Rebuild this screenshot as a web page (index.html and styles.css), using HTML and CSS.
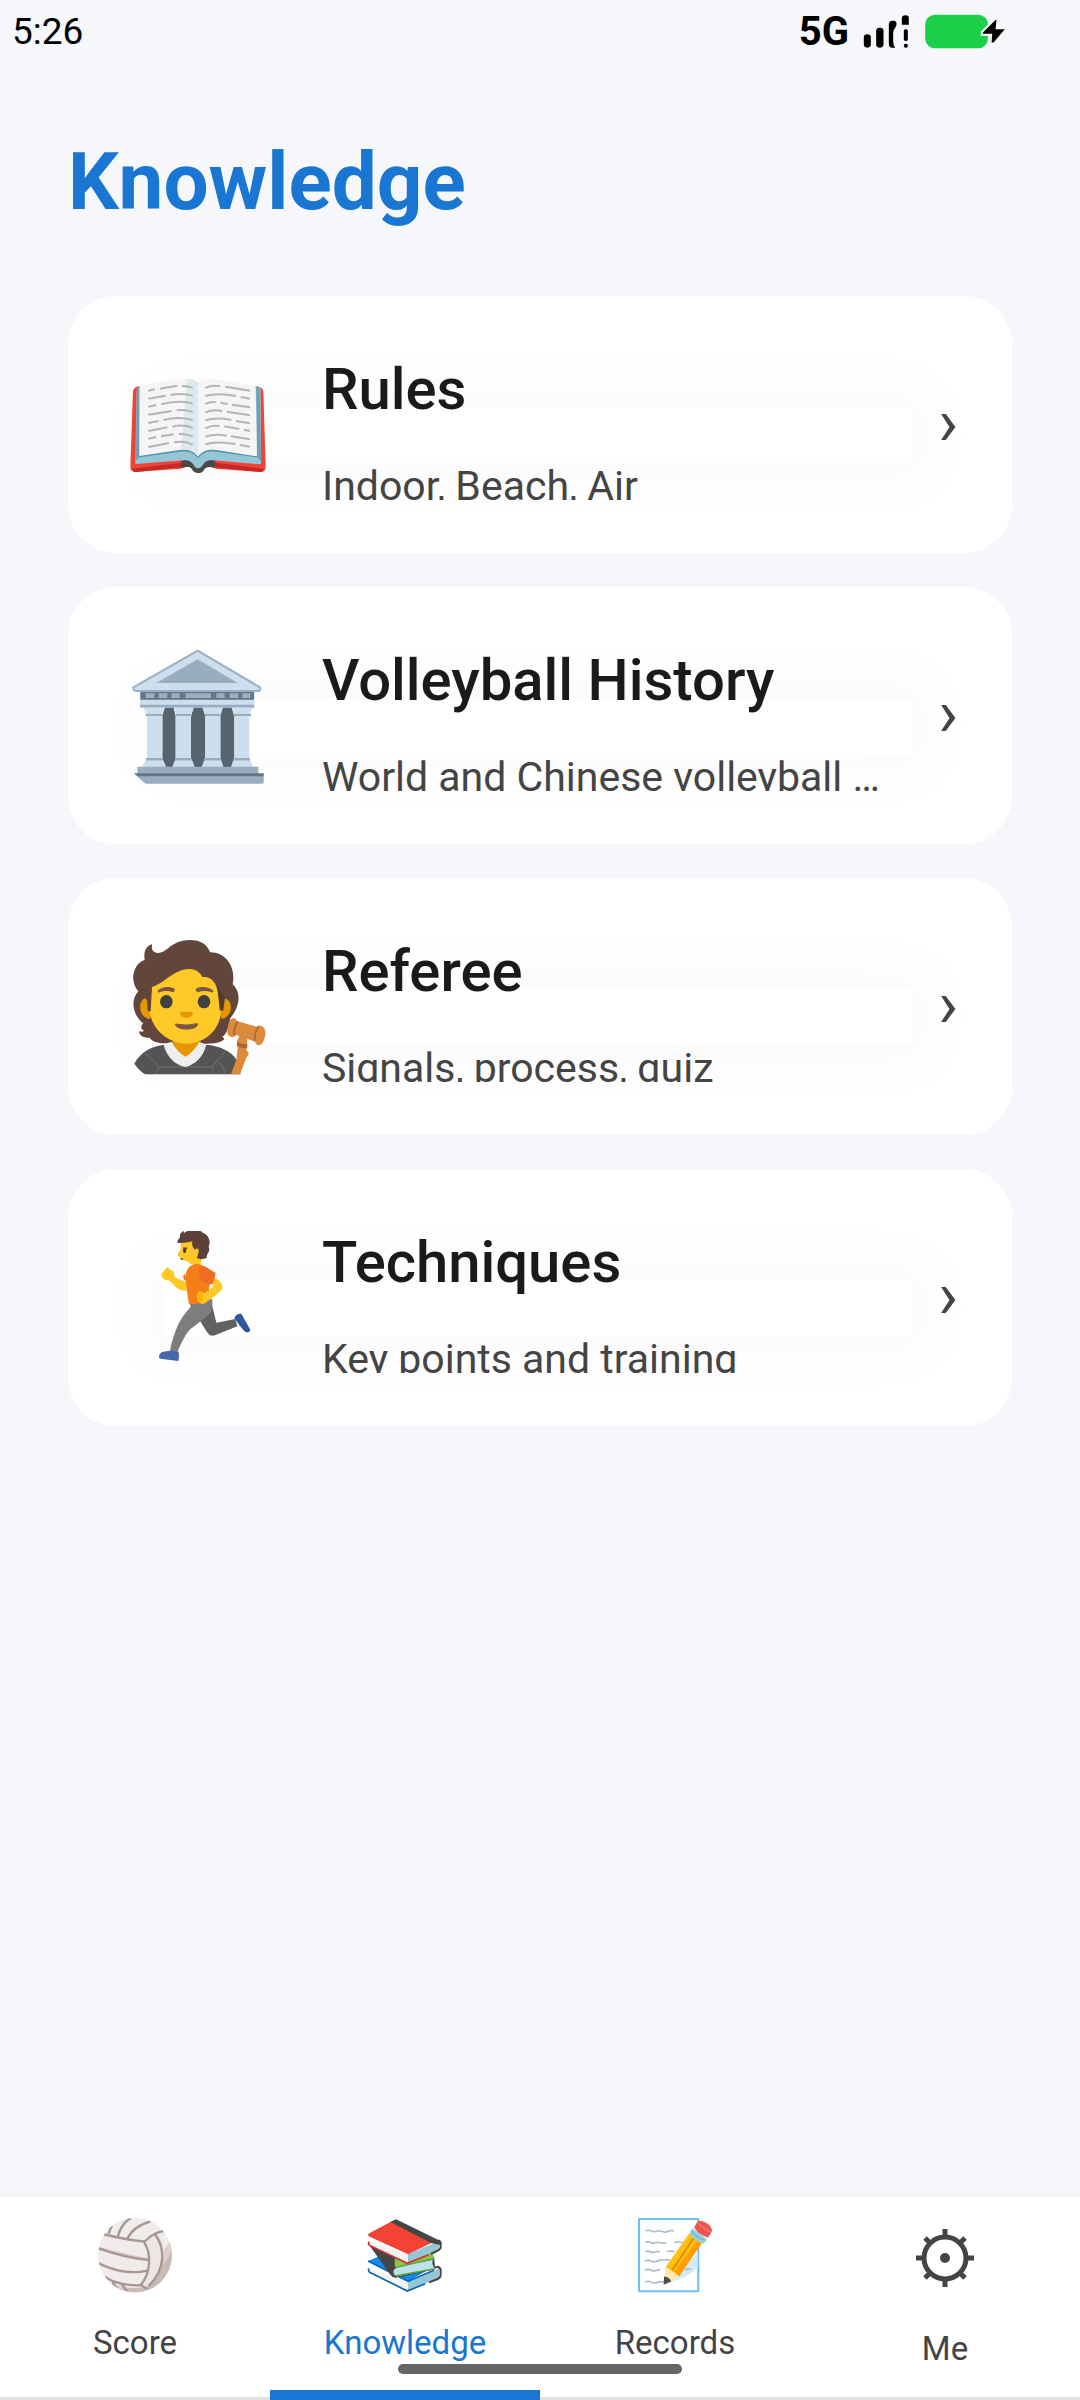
FILE: index.html
```html
<!DOCTYPE html>
<html lang="en">
<head>
  <meta charset="UTF-8" />
  <meta name="viewport" content="width=device-width, initial-scale=1.0" />
  <title>Knowledge</title>
  <link rel="stylesheet" href="styles.css">
</head>
<body>
  <header class="status-bar">
    <span class="status-time">5:26</span>
    <div class="status-icons">
      <span class="status-network">5G</span>
      <svg class="status-signal" viewBox="310 40 140 105" aria-hidden="true">
        <rect x="312" y="101" width="21" height="40" rx="10" />
        <rect x="349" y="81" width="22" height="60" rx="10" />
        <path d="M387 71q0-11 11-11h3q10 0 9 11c-1 10-10 15-10 28v22q0 12 6 20h-9q-10-1-10-12z" />
        <path d="M426 72V54q0-10 11-10t10 10v18z" />
        <rect x="432" y="86" width="12" height="35" rx="5" />
        <rect x="432" y="129" width="12" height="12" rx="5" />
      </svg>
      <svg class="status-battery" viewBox="493 40 245 106" aria-hidden="true">
        <rect x="495" y="42" width="190" height="102" rx="30" fill="#1ccf49" />
        <path d="M708 58l-38 38v4h28l-2 26h6l34-40h-28l3-28z" fill="#000" stroke="#f5f7fb" stroke-width="13" paint-order="stroke" />
      </svg>
    </div>
  </header>

  <main class="content">
    <h1 class="page-title">Knowledge</h1>

    <div class="card-list">
      <a class="card" href="#rules">
        <svg class="card-icon" viewBox="203 205 420 420" aria-hidden="true">
          <path d="M218 305q1-11 12-14l8-2 350 1 10 2q10 3 11 14l7 226q0 14-14 15l-135-10-18-6h-70l-18 6-137 10q-14-1-14-15z" fill="#f44336" />
          <path d="M216 537l146-18v14l-135 14q-9 0-11-10zM465 519l146 18q-3 10-12 10l-134-14z" fill="#c62828" />
          <path d="M362 514l20-5h65l18 5v20c-17-4-29-3-34 6-4 8-10 10-18 10s-14-3-18-11c-4-8-16-8-33-5z" fill="#494949" />
          <path d="M238 289l350 1 13 3 1 231-143-12c-21-2-27 7-32 14-8 13-20 13-27 0-7-10-14-15-28-14l-147 11 4-221z" fill="#94c6d6" />
          <path d="M237 291h-7l-4 223 10-12zM588 291l10 2 4 222-12-13z" fill="#6f9fb3" />
          <path d="M236 500l127-17c25-3 40 7 50 19 10-12 25-22 50-19l127 18" fill="none" stroke="#4e93a6" stroke-width="5" />
          <path d="M238 289c45-11 98-19 143-22q20 0 32 12 12-12 32-12c45 4 97 12 141 23l4 210-126-20c-27-3-42 8-51 21-10-14-25-25-51-21l-125 19z" fill="#f5f5f5" />
          <path d="M381 267q20 0 32 12v222c-10-14-25-24-51-21z" fill="#dceaed" />
          <g fill="none" stroke="#b5b5b5" stroke-width="6">
            <path d="M264 303l20-4m15-2l52-9m14 1q18 0 32 5M264 327l52-9m14-2q37-7 67 2M264 351l24-5m15-2q55-14 94-2M264 375l70-11m15-2q25-4 48 5M264 400l31-6m14-3q48-12 88 0M264 424l57-11m15-2q35-8 61 4M264 447l24-5m14-2l38-6m16-1q20-2 41 7M264 472l62-12m15-2q34-6 56 8" />
            <path d="M435 295q20-10 45-5m15 1l74 12M435 319q36-10 92 0m14 3l28 5M435 343q15-8 31-5m14 1l22 4m13 2l54 8M435 368q26-10 50-3m15 1l69 11M435 392q35-10 78-1m14 3l42 7M435 416q20-10 42-7m15 1l45 8m14 2l18 4M435 441q29-10 64-3m13 2l57 9M435 465q28-12 90-2m14 3l30 5" />
          </g>
        </svg>
        <div class="card-text">
          <h2 class="card-title">Rules</h2>
          <p class="card-subtitle">Indoor, Beach, Air</p>
        </div>
        <span class="card-arrow" aria-hidden="true">›</span>
      </a>

      <a class="card" href="#history">
        <svg class="card-icon" viewBox="203 208 420 420" aria-hidden="true">
          <path d="M240 335h342v50H240z" fill="#bdd1e4" />
          <path d="M240 337h341v23H240z" fill="#647687" />
          <path d="M256 341h26v14h-26zm39 0h26v14h-26zm38 0h25v14h-25zm42 0h77v14h-77zm93 0h25v14h-25zm40 0h26v14h-26zm38 0h24v14h-24z" fill="#9aafc1" />
          <path d="M412 213l187 110q3 11-8 11H229q-11 0-10-11z" fill="#cddeee" stroke="#9aafc1" stroke-width="6" stroke-linejoin="round" />
          <path d="M412 239l120 71H288z" fill="#98adc0" />
          <path d="M240 361h341v15H240z" fill="#cddeee" />
          <path d="M240 375h341v8H240z" fill="#98adc0" />
          <path d="M306 410l7-26h27l6 26v126l-6 26h-23l-11-26z" fill="#56646f" />
          <path d="M392 410l8-26h27l8 26v126l-8 26h-25l-10-26z" fill="#56646f" />
          <path d="M480 410l7-26h27l8 26v126l-8 26h-25l-9-26z" fill="#56646f" />
          <path d="M249 384h64q-3 14-9 18h-44q-6-4-11-18zM340 384h60q-3 14-9 18h-41q-6-4-10-18zM427 384h60q-3 14-9 18h-41q-7-4-10-18zM514 384h61q-3 14-9 18h-42q-7-4-10-18z" fill="#cddeee" />
          <path d="M256 402h51v8h-51zm90 0h48v8h-48zm87 0h49v8h-49zm87 0h52v8h-52z" fill="#98adc0" />
          <path d="M260 410h46v126h-46zm86 0h46v126h-46zm89 0h45v126h-45zm87 0h45v126h-45z" fill="#cddeee" />
          <path d="M257 535h51v8h-51zm87 0h50v8h-50zm87 0h50v8h-50zm88 0h50v8h-50z" fill="#98adc0" />
          <path d="M255 543h52l8 19h-70zm88 0h53l7 19h-67zm88 0h52l6 19h-65zm87 0h52l8 19h-66z" fill="#cddeee" />
          <path d="M231 561h363v22H231z" fill="#98adc0" />
          <path d="M222 582h388v26q0 4-4 4H258q-4 0-8-4z" fill="#98adc0" />
          <path d="M221 581h389v9H232z" fill="#647687" />
        </svg>
        <div class="card-text">
          <h2 class="card-title">Volleyball History</h2>
          <p class="card-subtitle">World and Chinese volleyball …</p>
        </div>
        <span class="card-arrow" aria-hidden="true">›</span>
      </a>

      <a class="card" href="#referee">
        <svg class="card-icon" viewBox="203 211 420 420" aria-hidden="true">
          <path d="M253 271c-4-26 5-43 22-47-2 20 5 30 29 24 18-6 35-36 84-37 34 0 53 14 61 37 47-1 79 44 68 96 30 28 18 71-7 101-5 25-8 40-20 54l-4 1 6 9c-22 20-75 12-95 10h-72c-17 5-48 0-57-15-25 2-33-12-31-19q12 3 14-3c-9-1-12-13-2-21-29-21-42-67-15-96-29-31-14-85 19-94z" fill="#63463b" />
          <path d="M336 504h80v20l-10 50-31 14-33-14z" fill="#e59600" />
          <path d="M222 582c20-38 55-53 90-57l64 65 61-65c43 3 77 21 92 46l12 43H255q-17-9-33-32z" fill="#545454" />
          <path d="M253 548l43 43-10 22M296 592h159M495 546l-41 46 8 22M472 575q20 15 22 39" fill="none" stroke="#676767" stroke-width="4" />
          <path d="M310 526l23-10c12 20 25 35 42 45 18-10 32-25 42-45l21 10c-9 34-33 60-63 66-32-6-56-31-65-66z" fill="#eee" />
          <path d="M256 386c-24 4-24 58 13 62l8-20zM492 386c30 7 24 56-8 62l-8-20z" fill="#e59600" />
          <path d="M275 352c45-15 62-52 112-54 21 1 33 11 39 24 30-2 45 18 50 66 24 70-30 134-97 134-67-1-125-61-109-134z" fill="#ffca28" />
          <path d="M275 351l-15 33 2 38q3 5 9 2z" fill="#63463b" />
          <path d="M471 350l7 70q6 5 11 2l5-38z" fill="#543930" />
          <path d="M291 364c10-12 35-16 52-7 0 5 0 9-4 11-16-5-29-5-43 1zM406 357c16-9 42-5 54 7l-5 5c-14-6-28-6-43-1q-7-4-6-11z" fill="#795548" />
          <ellipse cx="318" cy="396" rx="19" ry="20" fill="#404040" />
          <ellipse cx="431" cy="396" rx="19" ry="20" fill="#404040" />
          <path d="M358 431q1-5 8-5h24q8 0 8 6c-7 17-33 17-40-1z" fill="#e59600" />
          <path d="M345 463q32 7 66-1c4 21-64 22-66 1z" fill="#795548" stroke="#795548" stroke-width="3" stroke-linejoin="round" />
          <path d="M539 495l23 8-2 16 1 12-3 12q8 3 7 10-8 12-12 24l-14 37h-27l16-44 4-36q-4-6-2-20z" fill="#dc8a3c" />
          <path d="M532 516q12 10 29 6l-1 12q-18 5-30-7z" fill="#aa6433" />
          <path d="M521 445q7 2 8 9l59 17q8-5 15-2c13 5 15 17 9 39-4 15-13 22-21 17q-7-3-6-9l-57-20q-6 8-15 6c-14-3-14-14-10-31s9-27 18-26z" fill="#dc8a3c" />
          <path d="M533 455q-12 16-12 41M595 471q-13 16-12 42" fill="none" stroke="#aa6433" stroke-width="5" />
        </svg>
        <div class="card-text">
          <h2 class="card-title">Referee</h2>
          <p class="card-subtitle">Signals, process, quiz</p>
        </div>
        <span class="card-arrow" aria-hidden="true">›</span>
      </a>

      <a class="card" href="#techniques">
        <svg class="card-icon" viewBox="203 214 420 420" aria-hidden="true">
          <path d="M456 440l12 49 57-11 6 22-65 26c-14 5-20 0-26-9l-26-41z" fill="#616161" />
          <path d="M388 430l67-12c4 25 0 40-13 50l-54 42c-15 17-25 40-37 67l-22-4c5-28 14-54 25-79 8-18 22-35 37-53z" fill="#7d7d7d" />
          <path d="M522 476c2-9 10-15 21-14 10 18 18 31 27 48-1 7-7 9-15 7-12-11-21-25-33-41z" fill="#30569b" />
          <path d="M304 578q21-9 51-2 3 14-1 28l-54-7c-6-1-6-12 4-19z" fill="#4668ae" />
          <path d="M304 343l10-14 9-6 7 8 10 4 2 14c8 8 18 12 27 14l12 7-3 24c-20 1-32-10-45-26l-10-7c-9 2-19-5-19-18z" fill="#ffc827" />
          <path d="M373 343l-5 9q3 11 12 14z" fill="#ef6c21" />
          <path d="M364 241l43-3 20 29-6 48-31-2c-3-7-10-9-22-11q-9-1-6-8l-11-7q2-11 10-17 0-20 3-29z" fill="#ffc827" />
          <path d="M351 250c1-9 3-13 8-16-2-10 2-16 11-20l1 6c22-17 48-11 56-1 21 8 24 28 18 42q5 13-4 22l-3 13-16 3-13-4 4-9-10-9-1-10c-8-3-7-22-6-22-13 3-23 5-37 5z" fill="#5d4037" />
          <path d="M402 270q13-8 13 1 0 20-13 18z" fill="#ffc827" />
          <path d="M368 265l13 1" stroke="#795548" stroke-width="5" />
          <ellipse cx="373" cy="273" rx="5" ry="7" fill="#404040" />
          <path d="M360 294l9 2-2 4-7-1z" fill="#795548" />
          <path d="M405 312c20-1 41 14 45 43l-5 42-7 34-52 2c-6-30-6-50-10-73-3-24 7-43 29-48z" fill="#f57f17" />
          <path d="M454 361l12-6c13 9 24 20 19 32-11 18-38 33-57 46-11-2-20-12-19-25l6-13 20 5 24-20q-3-10-5-19z" fill="#ffc827" />
          <path d="M415 332q6-15 18-12l33 20q-3 17-9 33-14 5-37-13z" fill="#ef6c21" />
          <path d="M412 405l12-8q9 10 0 31-15-8-12-23z" fill="#ffb300" />
        </svg>
        <div class="card-text">
          <h2 class="card-title">Techniques</h2>
          <p class="card-subtitle">Key points and training</p>
        </div>
        <span class="card-arrow" aria-hidden="true">›</span>
      </a>
    </div>
  </main>

  <nav class="tab-bar" aria-label="Main">
    <a class="tab" href="#score">
      <svg class="tab-icon" viewBox="280 110 222 230" preserveAspectRatio="none" aria-hidden="true">
        <clipPath id="ball"><ellipse cx="391" cy="225" rx="108" ry="113" /></clipPath>
        <g clip-path="url(#ball)">
          <path d="M280 110h222v230H280z" fill="#f0eceb" />
          <path d="M502 170l-26 40c-5 40-10 75-38 112l-18 10-20-3-70-15-50-30v60h222z" fill="#dccfcc" />
          <path d="M502 205c-15 40-50 68-40 70-10 25-30 40-50 48l-80 6v15h170z" fill="#cbb9b5" />
          <path d="M285 250c45 25 95 35 140 22v6c-45 8-95 2-140-22zM285 201l143 34v8l-143-34zM300 160l115 22-3 7-112-20z" fill="#dccfcc" />
          <path d="M448 165l20-8c12 40 9 80-10 125-8 20-20 30-35 40l-12-5c20-20 24-50 24-82 0-30-5-45-15-50z" fill="#ece6e4" />
          <path d="M285 256c45 23 95 33 140 22-2 15-8 27-16 38-33 3-75-4-106-25z" fill="#f0eceb" />
          <g fill="none" stroke="#a89693" stroke-width="7">
            <path d="M300 162c30 8 78 20 119 22 17-17 36-29 55-31" />
            <path d="M314 160l9-25M340 172c5-22 15-43 38-59M368 177c12-28 35-44 68-54" />
            <path d="M285 205c45 17 95 30 146 35M285 250c45 23 95 33 141 22" />
            <path d="M417 185c23 35 20 95-9 131M448 160c29 40 37 103-17 159" />
            <path d="M303 291c30 21 72 28 105 25l20 12M325 307l14 19M352 313l16 22" />
          </g>
        </g>
      </svg>
      <span class="tab-label">Score</span>
    </a>
    <a class="tab active" href="#knowledge" aria-current="page">
      <svg class="tab-icon" viewBox="1065 110 222 230" preserveAspectRatio="none" aria-hidden="true">
        <path d="M1068 243l46-20 145 37-74 46z" fill="#0d8cf0" />
        <path d="M1070 262l115 46v24l-112-56q-6-6-3-14z" fill="#f2f2f2" />
        <path d="M1185 306l90-41v28l-90 40z" fill="#94c6d6" />
        <path d="M1068 243l117 62 75-34M1070 266q-2 8 4 12l109 56 52-22" fill="none" stroke="#0d63b0" stroke-width="5" />
        <path d="M1258 264l15-3q9 5 7 14v13q-3 8-14 12l-20 8" fill="none" stroke="#454545" stroke-width="6" />
        <path d="M1073 197l70 30 118 3 3 38-105 24-25-6z" fill="#454545" />
        <path d="M1146 230l108-17 8 22-116 32z" fill="#8bc34a" />
        <path d="M1146 263l112-24q-6 12 5 27l-111 24q-17-11-6-27z" fill="#b9e4ea" />
        <path d="M1260 236l-112 27q-16 9-6 26l118-22" fill="none" stroke="#689f38" stroke-width="4" />
        <path d="M1149 262q-17 9-9 27l12 3" fill="none" stroke="#454545" stroke-width="5" />
        <path d="M1070 184l115 38v28l-112-55q-6-5-3-11z" fill="#f2f2f2" />
        <path d="M1185 222l90-38v26l-90 38z" fill="#94c6d6" />
        <path d="M1070 160l65-36 120 64-70 35-112-53q-8-4-3-10z" fill="#f44336" />
        <path d="M1133 125l17-8 125 63q9 6 6 13l-7 1-22-5z" fill="#454545" />
        <path d="M1273 180q9 5 7 14v10q-3 6-14 11l-15 7" fill="none" stroke="#454545" stroke-width="6" />
        <path d="M1071 185q-5 8 5 13l107 52 62-26" fill="none" stroke="#d32f2f" stroke-width="5" />
      </svg>
      <span class="tab-label">Knowledge</span>
    </a>
    <a class="tab" href="#records">
      <svg class="tab-icon" viewBox="280 110 222 230" preserveAspectRatio="none" aria-hidden="true">
        <rect x="286" y="116" width="173" height="219" fill="#fff" stroke="#70bff2" stroke-width="6" stroke-linejoin="round" />
        <path d="M457 220v42c-22 23-45 37-88 46z" fill="#d3eafa" />
        <path d="M305 152q8-4 16 0t16 1 17 1 15 0 18-2M305 187q8-4 15 0t15 1 15 0 15 0M389 187q10-3 26 1M305 215q8-4 14 0t14 1 14 0M368 215q10-4 22 1M303 243q10-5 18 0t18 0 38-3M303 271q10-5 18 0t27-3M420 270q8-5 18-1M303 307q10-5 18 0t18 1 24-1" fill="none" stroke="#a9bcc7" stroke-width="5" />
        <path d="M433 159l36 30-66 100-40-26z" fill="#ffc107" />
        <path d="M457 181l12 9-66 99-16-11z" fill="#ff9c07" />
        <path d="M447 171l-64 100" stroke="#e0850c" stroke-width="5" />
        <path d="M363 262l9 3 8 10 10 2 13 12-37 25-8-3z" fill="#ffe9b0" />
        <path d="M359 290q16 1 21 15l-22 10z" fill="#4e4e52" />
        <path d="M442 143l42 34-9 14q-27-6-41-30z" fill="#94d1e0" />
        <path d="M437 152q17 20 41 29" fill="none" stroke="#72aebd" stroke-width="3" />
        <path d="M456 124q10-7 28 5 18 12 14 26l-10 17q-24-4-41-30z" fill="#ef5350" />
        <path d="M456 124q8 16 39 32" fill="none" stroke="#f47a77" stroke-width="4" />
      </svg>
      <span class="tab-label">Records</span>
    </a>
    <a class="tab" href="#me">
      <svg class="tab-icon tab-icon-symbol" viewBox="0 0 76 82" aria-hidden="true">
        <circle cx="38" cy="41" r="21" fill="none" stroke="currentColor" stroke-width="5" />
        <circle cx="38" cy="41" r="5" fill="currentColor" />
        <path d="M38 12v8M38 62v8M9 41h8M59 41h8M18 21l5 5M53 56l5 5M18 61l5-5M53 26l5-5" stroke="currentColor" stroke-width="5" />
      </svg>
      <span class="tab-label">Me</span>
    </a>
    <div class="home-indicator"></div>
  </nav>
</body>
</html>
```

FILE: styles.css
```css
* {
  box-sizing: border-box;
}

body {
  margin: 0;
  min-height: 100vh;
  display: flex;
  flex-direction: column;
  font-family: Roboto, sans-serif;
  background-color: #f5f7fb;
  color: #1a1a1a;
}

a {
  color: inherit;
  text-decoration: none;
}

/* Status bar */
.status-bar {
  display: flex;
  align-items: center;
  justify-content: space-between;
  height: 62px;
  padding: 0 74px 0 12px;
  color: #000;
}

.status-time {
  font-size: 37px;
}

.status-icons {
  display: flex;
  align-items: center;
  gap: 14px;
}

.status-network {
  font-size: 40px;
  font-weight: 700;
}

.status-signal {
  width: 47px;
  height: 35px;
}

.status-battery {
  width: 82px;
  height: 35px;
}

/* Page */
.content {
  flex: 1;
  padding: 72px 68px;
}

.page-title {
  margin: 0 0 66px;
  font-size: 80px;
  font-weight: 700;
  line-height: 96px;
  color: #1976d2;
}

.card-list {
  display: flex;
  flex-direction: column;
  gap: 34px;
}

.card {
  position: relative;
  z-index: 0;
  display: flex;
  align-items: center;
  padding: 59px 54px 53px 60px;
  border-radius: 48px;
  background-color: #fff;
}

/* soft glow behind the card content */
.card::before {
  content: "";
  position: absolute;
  z-index: -1;
  top: 111px;
  right: 99px;
  bottom: 90px;
  left: 95px;
  background-color: #fff;
  box-shadow: 0 0 60px 25px rgba(0, 0, 0, 0.02);
}

.card-icon {
  flex: none;
  width: 140px;
  height: 140px;
}

.card-text {
  flex: 1;
  min-width: 0;
  margin-left: 54px;
}

.card-title {
  margin: 0 0 37px;
  font-size: 58px;
  font-weight: 500;
  line-height: 68px;
}

/* one line, cut just under the baseline */
.card-subtitle {
  margin: 0;
  height: 40px;
  font-size: 41px;
  line-height: 52px;
  white-space: nowrap;
  overflow: hidden;
  color: #444;
}

.card-arrow {
  padding-bottom: 10px;
  font-size: 66px;
  line-height: 68px;
  color: #444;
}

/* Bottom tabs */
.tab-bar {
  position: relative;
  display: grid;
  grid-template-columns: repeat(4, 1fr);
  background-color: #fff;
  color: #444;
}

.tab {
  display: flex;
  flex-direction: column;
  align-items: center;
  gap: 30px;
  padding: 20px 0 28px;
  border-bottom: 3px solid #e0e0e0;
}

.tab.active {
  padding-bottom: 21px;
  border-bottom: 10px solid #1976d2;
  color: #1976d2;
}

.tab-icon {
  width: 76px;
  height: 76px;
}

.tab-icon-symbol {
  height: 82px;
}

.tab-label {
  font-size: 33px;
  line-height: 40px;
}

.home-indicator {
  position: absolute;
  bottom: 26px;
  left: 50%;
  width: 284px;
  height: 10px;
  margin-left: -142px;
  border-radius: 5px;
  background-color: #666;
}
```
